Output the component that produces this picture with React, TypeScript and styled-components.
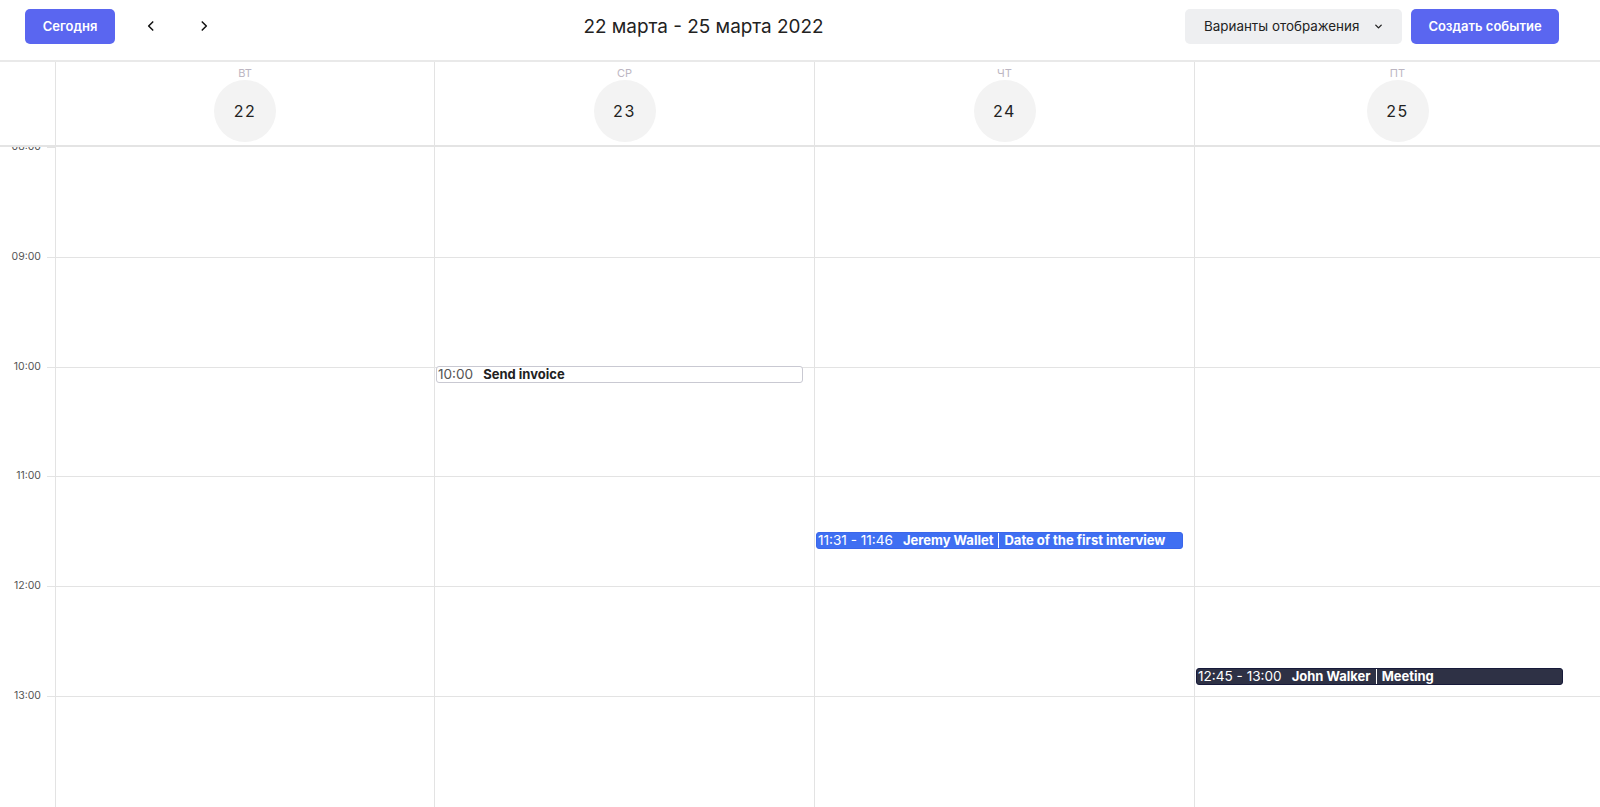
import React from "react";
import styled, { createGlobalStyle } from "styled-components";

const GlobalStyle = createGlobalStyle`
  * { box-sizing: border-box; }
  html, body { margin: 0; padding: 0; background: #fff; }
  body { font-family: Inter, "Noto Sans", "Liberation Sans", sans-serif; color: #222; }
`;

const COLS = "56px 379px 380px 380px 1fr";
const HOUR = 109.8;
const START = 8;

const Page = styled.div`
  display: flex;
  flex-direction: column;
  height: 100vh;
  overflow: hidden;
`;

const Toolbar = styled.header`
  height: 62px;
  flex: none;
  display: flex;
  align-items: center;
  justify-content: space-between;
  padding: 0 41px 8px 25px;
  border-bottom: 2px solid #e9e9e9;
`;

const Group = styled.div`
  display: flex;
  align-items: center;
  gap: 9px;
`;

const PrimaryButton = styled.button<{ $w: number }>`
  height: 35px;
  width: ${(p) => p.$w}px;
  padding: 0;
  border: none;
  border-radius: 5px;
  background: #5a66f0;
  color: #fff;
  font-family: inherit;
  font-size: 13px;
  font-weight: 600;
  cursor: pointer;
`;

const GhostButton = styled.button`
  height: 35px;
  width: 217px;
  padding: 0 0 0 19px;
  border: none;
  border-radius: 5px;
  background: #eeeff1;
  color: #222;
  font-family: inherit;
  font-size: 13.4px;
  font-weight: 400;
  display: flex;
  align-items: center;
  gap: 14px;
`;

const NavButton = styled.button<{ $ml?: number }>`
  width: 36px;
  height: 35px;
  border: none;
  background: transparent;
  display: flex;
  align-items: center;
  justify-content: center;
  padding: 0;
  margin-left: ${(p) => p.$ml ?? 0}px;
`;

const Title = styled.h1`
  margin: 0;
  font-size: 18.9px;
  font-weight: 400;
  color: #222;
`;

const HeaderRow = styled.div`
  display: grid;
  grid-template-columns: ${COLS};
  height: 85px;
  flex: none;
  border-bottom: 2px solid #e4e4e4;
`;

const GutterCell = styled.div`
  border-right: 1px solid #e3e3e3;
`;

const DayHead = styled.div<{ $last?: boolean }>`
  display: flex;
  flex-direction: column;
  align-items: center;
  padding-top: 5px;
  border-right: ${(p) => (p.$last ? "none" : "1px solid #e3e3e3")};
`;

const Weekday = styled.span`
  font-size: 11px;
  line-height: 12px;
  color: #bcb6c2;
  text-transform: uppercase;
`;

const DayCircle = styled.div`
  margin-top: 1px;
  width: 62px;
  height: 62px;
  border-radius: 50%;
  background: #f3f3f3;
  display: flex;
  align-items: center;
  justify-content: center;
  font-size: 16px;
  letter-spacing: 1.6px;
  color: #222;
`;

const Body = styled.div`
  flex: 1;
  display: grid;
  grid-template-columns: ${COLS};
  overflow: hidden;
  min-height: 0;
`;

const Gutter = styled.div`
  border-right: 1px solid #e3e3e3;
  display: flex;
  flex-direction: column;
`;

const GutterSlot = styled.div`
  height: ${HOUR}px;
  flex: none;
  position: relative;
`;

const HourLabel = styled.span`
  position: absolute;
  top: -7px;
  right: 14px;
  font-size: 10.5px;
  line-height: 13px;
  color: #555;
`;

const Tick = styled.span`
  position: absolute;
  top: 0;
  right: 0;
  width: 8px;
  border-top: 1px solid #e3e3e3;
`;

const DayColumn = styled.div<{ $last?: boolean }>`
  position: relative;
  display: flex;
  flex-direction: column;
  border-right: ${(p) => (p.$last ? "none" : "1px solid #e3e3e3")};
`;

const Slot = styled.div<{ $first?: boolean }>`
  height: ${HOUR}px;
  flex: none;
  border-top: ${(p) => (p.$first ? "none" : "1px solid #e3e3e3")};
`;

type Variant = "light" | "blue" | "dark";

const EventBox = styled.div<{ $variant: Variant }>`
  position: absolute;
  left: 1px;
  width: 367px;
  height: 17px;
  border-radius: 3px;
  display: flex;
  align-items: center;
  white-space: nowrap;
  overflow: hidden;
  font-size: 13px;
  line-height: 15px;
  padding: 0 1px;
  background: ${(p) =>
    p.$variant === "light" ? "#fff" : p.$variant === "blue" ? "#3f6ff2" : "#2e3145"};
  border: 1px solid
    ${(p) =>
      p.$variant === "light" ? "#c9c9d2" : p.$variant === "blue" ? "#3a66ea" : "#171a3a"};
  color: ${(p) => (p.$variant === "light" ? "#222" : "#fff")};
`;

const EvTime = styled.span<{ $variant: Variant }>`
  font-weight: 400;
  font-size: 13.6px;
  color: ${(p) => (p.$variant === "light" ? "#555" : "#fff")};
  margin-right: 10px;
`;

const EvName = styled.span`
  font-weight: 700;
`;

const Sep = styled.span`
  display: inline-block;
  width: 1px;
  height: 15px;
  background: #fff;
  margin: 0 5px 0 5px;
`;

const ChevronLeft = () => (
  <svg width="14" height="14" viewBox="0 0 24 24" fill="none" stroke="#111" strokeWidth="2.6" strokeLinecap="round" strokeLinejoin="round">
    <path d="M15 5l-7 7 7 7" />
  </svg>
);
const ChevronRight = () => (
  <svg width="14" height="14" viewBox="0 0 24 24" fill="none" stroke="#111" strokeWidth="2.6" strokeLinecap="round" strokeLinejoin="round">
    <path d="M9 5l7 7-7 7" />
  </svg>
);
const ChevronDown = () => (
  <svg width="11" height="11" viewBox="0 0 24 24" fill="none" stroke="#222" strokeWidth="3" strokeLinecap="round" strokeLinejoin="round">
    <path d="M6 9l6 6 6-6" />
  </svg>
);

type Ev = { day: number; start: number; variant: Variant; time: string; name: string; desc?: string };

const days = [
  { wd: "вт", n: 22 },
  { wd: "ср", n: 23 },
  { wd: "чт", n: 24 },
  { wd: "пт", n: 25 },
];

const hours = ["08:00", "09:00", "10:00", "11:00", "12:00", "13:00"];

const events: Ev[] = [
  { day: 1, start: 10, variant: "light", time: "10:00", name: "Send invoice" },
  { day: 2, start: 11 + 31 / 60, variant: "blue", time: "11:31 - 11:46", name: "Jeremy Wallet", desc: "Date of the first interview" },
  { day: 3, start: 12.75, variant: "dark", time: "12:45 - 13:00", name: "John Walker", desc: "Meeting" },
];

export default function App() {
  return (
    <Page>
      <GlobalStyle />
      <Toolbar>
        <Group>
          <PrimaryButton $w={90}>Сегодня</PrimaryButton>
          <NavButton $ml={9}><ChevronLeft /></NavButton>
          <NavButton $ml={8}><ChevronRight /></NavButton>
        </Group>
        <Title>22 марта - 25 марта 2022</Title>
        <Group>
          <GhostButton>
            Варианты отображения
            <ChevronDown />
          </GhostButton>
          <PrimaryButton $w={148}>Создать событие</PrimaryButton>
        </Group>
      </Toolbar>

      <HeaderRow>
        <GutterCell />
        {days.map((d, i) => (
          <DayHead key={d.n} $last={i === days.length - 1}>
            <Weekday>{d.wd}</Weekday>
            <DayCircle>{d.n}</DayCircle>
          </DayHead>
        ))}
      </HeaderRow>

      <Body>
        <Gutter>
          {hours.map((h) => (
            <GutterSlot key={h}>
              <HourLabel>{h}</HourLabel>
              <Tick />
            </GutterSlot>
          ))}
        </Gutter>
        {days.map((d, i) => (
          <DayColumn key={d.n} $last={i === days.length - 1}>
            {hours.map((h, j) => (
              <Slot key={h} $first={j === 0} />
            ))}
            {events
              .filter((e) => e.day === i)
              .map((e) => (
                <EventBox
                  key={e.name}
                  $variant={e.variant}
                  style={{ top: (e.start - START) * HOUR - 1 }}
                >
                  <EvTime $variant={e.variant}>{e.time}</EvTime>
                  <EvName>{e.name}</EvName>
                  {e.desc && (
                    <>
                      <Sep />
                      <EvName>{e.desc}</EvName>
                    </>
                  )}
                </EventBox>
              ))}
          </DayColumn>
        ))}
      </Body>
    </Page>
  );
}
